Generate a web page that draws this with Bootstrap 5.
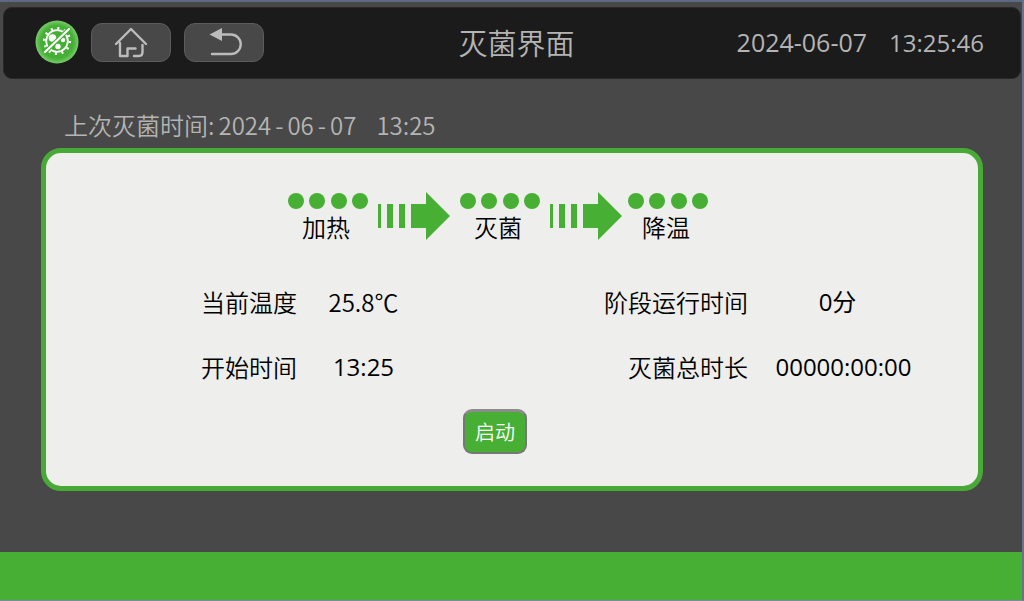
<!DOCTYPE html>
<html lang="zh-CN">
<head>
<meta charset="utf-8">
<meta name="viewport" content="width=device-width, initial-scale=1">
<title>灭菌界面</title>
<link rel="stylesheet" href="https://cdn.jsdelivr.net/npm/bootstrap@5.3.0/dist/css/bootstrap.min.css">
<style>
:root { --leaf: #47b034; --slate: #484848; --silver: #b4b4b4; }
body { background: var(--slate); color: #000; font-family: "Noto Sans CJK SC", sans-serif; font-size: 24px; font-weight: 350; line-height: 32px; border-top: 2px solid #5c6a85; border-right: 2px solid #69728a; border-bottom: 1px solid #8088a0; }
.latin { font-family: "Open Sans", "Noto Sans CJK SC", sans-serif; font-weight: 400; }
.topbar { display: grid; grid-template-columns: 1fr auto 1fr; margin: 5px 1px 0 3px; height: 72px; padding: 0 36px 2px 31px; background: #1b1b1b; border: 1px solid #292929; border-radius: 9px; color: var(--silver); }
.topbar h1 { font-size: 29px; line-height: 40px; font-weight: 350; padding-left: 14px; }
.navkey { width: 80px; height: 39px; padding: 0; border: 1px solid #5c5c5c; border-radius: 11px; background: var(--slate); color: #bcbcbc; }
.navkey + .navkey { margin-left: 13px; }
.navkey:hover { background: #555; border-color: #777; }
.clock { gap: 22px; }
.clock-date { font-size: 25px; }
.last-run { color: var(--silver); padding: 30px 64px 7px; gap: 4px; }
.panel { background: #eeeeec; border: 5px solid #49a937; border-radius: 20px; margin: 0 39px 0 41px; padding: 39px 0 32px; }
.steps { gap: 10px; padding-right: 28px; }
.step-item { width: 80px; padding-top: 1px; }
.step-item:last-child { margin-left: -4px; }
.step-name { padding: 2px 4px 0 0; }
.pip { width: 16px; height: 16px; border-radius: 50%; background: var(--leaf); }
.readings { display: grid; grid-template-columns: 251fr 133fr 318fr 191fr 39fr; row-gap: 33px; margin: 43px 0 26px; }
.readings dt { font-weight: 350; text-align: right; }
.readings dd { margin: 0; text-align: center; }
.readings dt:nth-of-type(even) { grid-column: 3; }
.readings dt:nth-of-type(odd) { grid-column: 1; }
.stage-time { padding-right: 12px; }
.start-row { padding-right: 34px; }
.start { width: 64px; height: 45px; padding: 0; font-size: 20px; font-weight: 350; color: #fff; background: var(--leaf); border: 2px solid #777; border-top: 3px solid #8c8c8c; border-radius: 9px; }
.start:hover { color: #fff; background: #3c9a2c; border-color: #777; }
.footband { background: var(--leaf); height: 48px; }
</style>
<script defer src="https://cdn.jsdelivr.net/npm/bootstrap@5.3.0/dist/js/bootstrap.bundle.min.js"></script>
</head>
<body class="min-vh-100 d-flex flex-column">
<header class="topbar align-items-center">
  <div class="d-flex align-items-center">
    <svg class="me-2 flex-shrink-0" width="44" height="44" viewBox="0 0 44 44" aria-hidden="true">
      <defs><radialGradient id="glow"><stop offset=".75" stop-color="#45ae35"/><stop offset="1" stop-color="#79cc6c"/></radialGradient></defs>
      <circle cx="22" cy="22" r="21.5" fill="url(#glow)"/>
      <g fill="none" stroke="#fff">
        <circle cx="22" cy="21" r="10.8" stroke-width="1.8"/>
        <circle cx="22" cy="21" r="12.8" stroke-width="2.6" stroke-dasharray="2 4.7"/>
      </g>
      <g fill="#fff"><circle cx="17.5" cy="18" r="3.8"/><circle cx="28" cy="20" r="2.2"/><circle cx="23" cy="26.5" r="2.7"/></g>
      <path d="M9 33 35 8" stroke="#45ae35" stroke-width="4.5"/>
      <path d="M10 32 34 9" stroke="#fff" stroke-width="2.2" stroke-linecap="round"/>
    </svg>
    <button type="button" class="btn navkey ms-1 d-flex align-items-center justify-content-center" aria-label="主页">
      <svg width="34" height="34" viewBox="0 0 34 34" fill="none" stroke="currentColor" stroke-width="2.4" stroke-linecap="round" stroke-linejoin="round"><path d="M2 19 17 4 32 19M6 18V31H13.5V23.5H21.5M28.5 20V27Q28.5 31 25 31H20"/></svg>
    </button>
    <button type="button" class="btn navkey d-flex align-items-center justify-content-center" aria-label="返回">
      <svg width="36" height="34" viewBox="0 0 36 34"><path d="M10 9.5H25A9.7 9.7 0 0 1 25 29H6" fill="none" stroke="currentColor" stroke-width="2.4" stroke-linecap="round"/><path d="M3.5 9.5 16 3V16Z" fill="currentColor"/></svg>
    </button>
  </div>
  <h1 class="m-0">灭菌界面</h1>
  <div class="clock latin d-flex justify-content-end align-items-baseline text-nowrap"><span class="clock-date">2024-06-07</span><span>13:25:46</span></div>
</header>
<main class="flex-grow-1">
  <div class="last-run d-flex"><span>上次灭菌时间:</span><span>2024</span><span>-</span><span>06</span><span>-</span><span>07</span><span class="ms-3">13:25</span></div>
  <section class="panel">
    <div class="steps d-flex justify-content-center align-items-start">
      <div class="step-item text-center"><div class="d-flex justify-content-between"><i class="pip"></i><i class="pip"></i><i class="pip"></i><i class="pip"></i></div><div class="step-name">加热</div></div>
      <svg width="72" height="48" viewBox="0 0 72 48" fill="#47b034" aria-hidden="true"><path d="M0 12h3v24H0zM9 12h6v24H9zM21 12h6v24h-6zM33 12h15V0l24 24-24 24V36H33z"/></svg>
      <div class="step-item text-center"><div class="d-flex justify-content-between"><i class="pip"></i><i class="pip"></i><i class="pip"></i><i class="pip"></i></div><div class="step-name">灭菌</div></div>
      <svg width="72" height="48" viewBox="0 0 72 48" fill="#47b034" aria-hidden="true"><path d="M0 12h3v24H0zM9 12h6v24H9zM21 12h6v24h-6zM33 12h15V0l24 24-24 24V36H33z"/></svg>
      <div class="step-item text-center"><div class="d-flex justify-content-between"><i class="pip"></i><i class="pip"></i><i class="pip"></i><i class="pip"></i></div><div class="step-name">降温</div></div>
    </div>
    <dl class="readings">
      <dt>当前温度</dt><dd>25.8℃</dd>
      <dt>阶段运行时间</dt><dd class="latin stage-time">0分</dd>
      <dt>开始时间</dt><dd class="latin">13:25</dd>
      <dt>灭菌总时长</dt><dd class="latin">00000:00:00</dd>
    </dl>
    <div class="start-row d-flex justify-content-center"><button type="button" class="btn start">启动</button></div>
  </section>
</main>
<footer class="footband"></footer>
</body>
</html>
